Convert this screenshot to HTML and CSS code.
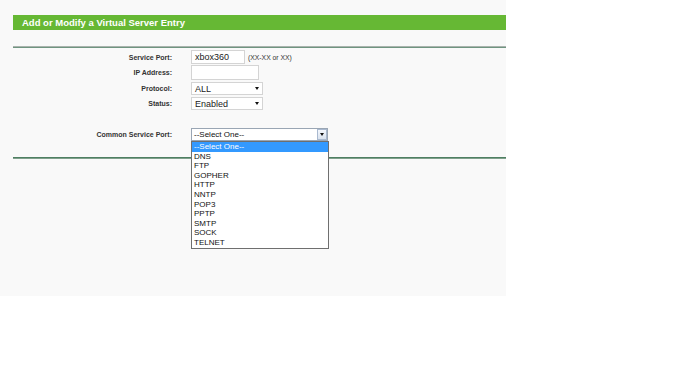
FILE: index.html
```html
<!DOCTYPE html>
<html>
<head>
<meta charset="utf-8">
<link rel="stylesheet" href="styles.css">
</head>
<body>
<div class="page">
  <div class="titlebar">Add or Modify a Virtual Server Entry</div>
  <div class="rule"></div>
  <div class="form">
    <div class="row r1">
      <div class="label">Service Port:</div>
      <div class="ctrl">
        <div class="input w54">xbox360</div>
        <span class="hint">(XX-XX or XX)</span>
      </div>
    </div>
    <div class="row r2">
      <div class="label">IP Address:</div>
      <div class="ctrl"><div class="input w68"></div></div>
    </div>
    <div class="row r3">
      <div class="label">Protocol:</div>
      <div class="ctrl"><div class="select w72"><span>ALL</span><i class="tri"></i></div></div>
    </div>
    <div class="row r4">
      <div class="label">Status:</div>
      <div class="ctrl"><div class="select w72"><span>Enabled</span><i class="tri"></i></div></div>
    </div>
    <div class="row r5">
      <div class="label">Common Service Port:</div>
      <div class="ctrl">
        <div class="combo">
          <span>--Select One--</span>
          <div class="btn"><i class="tri"></i></div>
          <ul class="list">
            <li class="sel">--Select One--</li>
            <li>DNS</li>
            <li>FTP</li>
            <li>GOPHER</li>
            <li>HTTP</li>
            <li>NNTP</li>
            <li>POP3</li>
            <li>PPTP</li>
            <li>SMTP</li>
            <li>SOCK</li>
            <li>TELNET</li>
          </ul>
        </div>
      </div>
    </div>
  </div>
  <div class="rule2"></div>
</div>
</body>
</html>
```

FILE: styles.css
```css
html, body {
  margin: 0;
  padding: 0;
  background: #ffffff;
  font-family: "Liberation Sans", Arial, sans-serif;
}
.page {
  width: 506px;
  height: 296px;
  background: #f9f9f9;
  padding-top: 15px;
  box-sizing: border-box;
}
.titlebar {
  margin-left: 13px;
  height: 15px;
  line-height: 15px;
  background: #66b834;
  color: #ffffff;
  font-weight: bold;
  font-size: 9.5px;
  padding-left: 9px;
}
.rule {
  margin: 16px 0 0 13px;
  height: 1px;
  background: #a9b3ad;
  border-bottom: 1px solid #6f9480;
}
.form {
  margin-top: 2px;
}
.row {
  display: grid;
  grid-template-columns: 172px auto;
  column-gap: 19px;
  align-items: center;
}
.r1 { height: 14px; }
.r2 { height: 15px; margin-top: 1px; }
.r3 { height: 13px; margin-top: 2px; }
.r4 { height: 13px; margin-top: 2px; }
.r5 { height: 13px; margin-top: 18px; }
.label {
  text-align: right;
  font-weight: bold;
  font-size: 7px;
  color: #333333;
}
.ctrl {
  display: flex;
  align-items: center;
  height: 100%;
}
.input, .select {
  box-sizing: border-box;
  height: 100%;
  background: #ffffff;
  border: 1px solid #d4d4d4;
  font-size: 9px;
  color: #222222;
  padding-left: 3px;
  display: flex;
  align-items: center;
}
.w54 { width: 54px; }
.w68 { width: 68px; }
.w72 { width: 72px; justify-content: space-between; padding-right: 3px; }
.hint {
  font-size: 6.8px;
  color: #333333;
  margin-left: 3px;
}
.tri {
  display: block;
  width: 0;
  height: 0;
  border-left: 2.5px solid transparent;
  border-right: 2.5px solid transparent;
  border-top: 3px solid #111111;
}
.combo {
  position: relative;
  box-sizing: border-box;
  width: 137px;
  height: 13px;
  background: #ffffff;
  border: 1px solid #9aa6b4;
  font-size: 8px;
  color: #111111;
  padding-left: 2px;
  display: flex;
  align-items: center;
}
.combo > span { flex: 1; }
.btn {
  box-sizing: border-box;
  width: 10px;
  height: 11px;
  background: linear-gradient(#f4f7fc, #d9e2ee);
  border: 1px solid #a9b9cf;
  display: flex;
  align-items: center;
  justify-content: center;
}
.list {
  position: absolute;
  left: -1px;
  top: 12px;
  width: 138px;
  margin: 0;
  padding: 0;
  list-style: none;
  box-sizing: border-box;
  background: #ffffff;
  border: 1px solid #6f6f6f;
  z-index: 2;
}
.list li {
  height: 9.6px;
  line-height: 9.6px;
  font-size: 8px;
  color: #111111;
  padding-left: 2px;
}
.list li.sel {
  background: #3399ff;
  color: #ffffff;
}
.rule2 {
  margin: 16px 0 0 13px;
  height: 1px;
  background: #4f7f62;
  border-bottom: 1px solid #7fa08c;
}
```
